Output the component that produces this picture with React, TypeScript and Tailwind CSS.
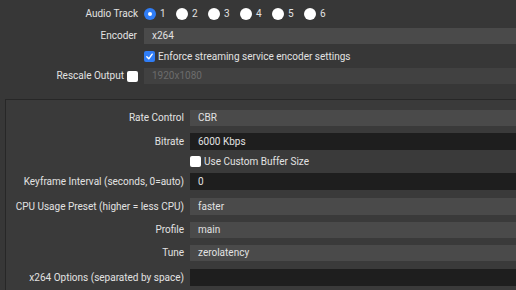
import React from "react";

const font = { fontFamily: "Roboto, 'Noto Sans', sans-serif" };

function Radio({ checked, label }: { checked?: boolean; label: string }) {
  return (
    <div className="flex items-center gap-[4px] w-[32px]">
      {checked ? (
        <span className="w-[12px] h-[12px] rounded-full bg-[#2f7df6] flex items-center justify-center">
          <span className="w-[4px] h-[4px] rounded-full bg-white" />
        </span>
      ) : (
        <span className="w-[12px] h-[12px] rounded-full bg-white" />
      )}
      <span>{label}</span>
    </div>
  );
}

function Check({ checked }: { checked?: boolean }) {
  if (checked) {
    return (
      <span className="w-[11px] h-[11px] rounded-[2px] bg-[#2f7df6] flex items-center justify-center shrink-0">
        <svg width="9" height="9" viewBox="0 0 10 10">
          <path d="M2 5.3 L4.2 7.6 L8 2.4" fill="none" stroke="white" strokeWidth="1.6" strokeLinecap="round" strokeLinejoin="round" />
        </svg>
      </span>
    );
  }
  return <span className="w-[11px] h-[11px] rounded-[2px] bg-white shrink-0" />;
}

function Row({ label, children, className = "" }: { label: React.ReactNode; children: React.ReactNode; className?: string }) {
  return (
    <div className={"flex items-center " + className}>
      <div className="w-[184px] shrink-0 text-right pr-[6px] whitespace-nowrap">{label}</div>
      <div className="flex-1 h-full">{children}</div>
    </div>
  );
}

function Select({ value }: { value: string }) {
  return <div className="h-full bg-[#4a4a4a] flex items-center pl-[8px]">{value}</div>;
}

function Input({ value }: { value: string }) {
  return <div className="h-full bg-[#1e1e1e] flex items-center pl-[8px]">{value}</div>;
}

export default function App() {
  return (
    <div className="w-[516px] h-[290px] overflow-hidden bg-[#373737] text-[#e2e2e2] text-[10px] leading-none whitespace-nowrap" style={font}>
      {/* top section */}
      <div className="pt-[6px]">
        <div className="flex items-center h-[16px]">
          <div className="w-[144px] shrink-0 text-right pr-[6px]">Audio Track</div>
          <div className="flex items-center">
            <Radio checked label="1" />
            <Radio label="2" />
            <Radio label="3" />
            <Radio label="4" />
            <Radio label="5" />
            <Radio label="6" />
          </div>
        </div>
        <div className="flex items-center h-[16px] mt-[6px]">
          <div className="w-[144px] shrink-0 text-right pr-[7px]">Encoder</div>
          <div className="flex-1 h-full bg-[#4a4a4a] flex items-center pl-[8px]">x264</div>
        </div>
        <div className="flex items-center h-[17px] mt-[4px]">
          <div className="w-[144px] shrink-0" />
          <div className="flex items-center gap-[3px]">
            <Check checked />
            <span>Enforce streaming service encoder settings</span>
          </div>
        </div>
        <div className="flex items-center h-[16px] mt-[3px]">
          <div className="w-[144px] shrink-0 flex items-center justify-end gap-[3px] pr-[6px]">
            <span>Rescale Output</span>
            <Check />
          </div>
          <div className="flex-1 h-full bg-[#414141] flex items-center pl-[8px] text-[#6c6c6c]">1920x1080</div>
        </div>
      </div>

      {/* encoder settings panel */}
      <div className="mt-[15px] ml-[5px] w-[530px] h-[200px] border-l border-t border-[#272727] bg-[#3a3a3a] pt-[10px]">
        <Row label="Rate Control" className="h-[16px]">
          <Select value="CBR" />
        </Row>
        <Row label="Bitrate" className="h-[17px] mt-[7px]">
          <Input value="6000 Kbps" />
        </Row>
        <Row label="" className="h-[23px]">
          <div className="h-full flex items-center gap-[3px]">
            <Check />
            <span>Use Custom Buffer Size</span>
          </div>
        </Row>
        <Row label="Keyframe Interval (seconds, 0=auto)" className="h-[17px]">
          <Input value="0" />
        </Row>
        <Row label="CPU Usage Preset (higher = less CPU)" className="h-[17px] mt-[8px]">
          <Select value="faster" />
        </Row>
        <Row label="Profile" className="h-[16px] mt-[7px]">
          <Select value="main" />
        </Row>
        <Row label="Tune" className="h-[16px] mt-[7px]">
          <Select value="zerolatency" />
        </Row>
        <Row label="x264 Options (separated by space)" className="h-[17px] mt-[8px]">
          <Input value="" />
        </Row>
      </div>
    </div>
  );
}
